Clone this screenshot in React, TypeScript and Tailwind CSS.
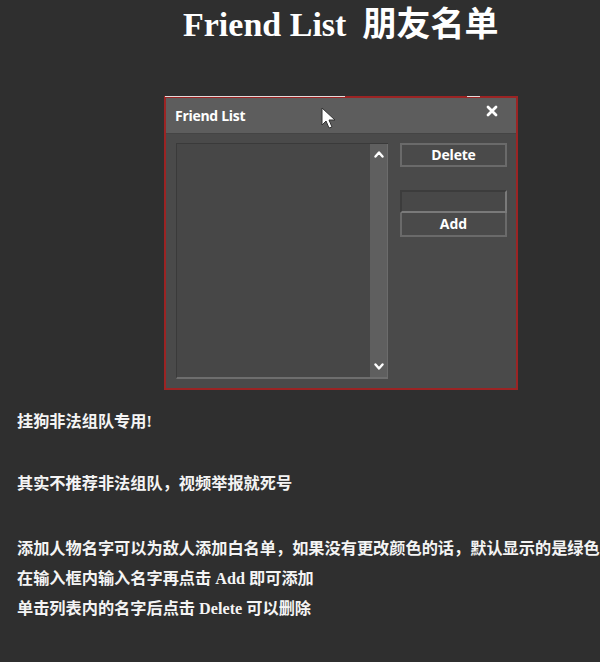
import React from 'react';

const cjk = '"Liberation Serif", "Noto Sans CJK SC", serif';

const notes = [
  { text: '挂狗非法组队专用!', mt: 'mt-0' },
  { text: '其实不推荐非法组队，视频举报就死号', mt: 'mt-[32px]' },
  { text: '添加人物名字可以为敌人添加白名单，如果没有更改颜色的话，默认显示的是绿色', mt: 'mt-[35px]' },
  { text: '在输入框内输入名字再点击 Add 即可添加', mt: 'mt-0' },
  { text: '单击列表内的名字后点击 Delete 可以删除', mt: 'mt-0' },
];

const Chevron = ({ down = false }: { down?: boolean }) => (
  <svg width="10" height="8" viewBox="0 0 10 8" className={down ? 'rotate-180' : ''}>
    <path d="M1.5 6.5 L5 2.5 L8.5 6.5" fill="none" stroke="#ffffff" strokeWidth="2.4" strokeLinecap="round" strokeLinejoin="round" />
  </svg>
);

const FriendListWindow = () => (
  <div className="relative ml-[164px] mt-[49px] w-[354px]">
    {/* stray highlight lines over the top border */}
    <div className="absolute left-[1px] top-0 h-[1px] w-[180px] bg-[#e6dcdc]" />
    <div className="absolute left-[303px] top-0 h-[1px] w-[13px] bg-[#e6dcdc]" />

    <div className="flex h-[294px] flex-col border-2 border-[#9b2424] bg-[#4a4a4a]">
      <div className="flex h-[36px] items-center justify-between border-b border-[#444] bg-[#5d5d5d] pl-[9px] pr-[18px]">
        <span className="text-[14px] font-bold tracking-[-0.3px] text-white" style={{ fontFamily: '"Open Sans", sans-serif' }}>
          Friend List
        </span>
        <svg width="12" height="12" viewBox="0 0 12 12" className="mb-[10px]">
          <path d="M2 2 L10 10 M10 2 L2 10" stroke="#ffffff" strokeWidth="2.8" strokeLinecap="round" />
        </svg>
      </div>

      <div className="flex gap-[12px] pl-[10px] pt-[9px]">
        <div className="flex h-[236px] w-[212px] border-l border-t border-[#3a3a3a] border-b-2 border-b-[#6e6e6e]">
          <div className="flex-1 bg-[#474747]" />
          <div className="flex w-[18px] flex-col items-center justify-between border-r border-[#6c6c6c] bg-[#5f5f5f] pb-[6px] pt-[6px]">
            <Chevron />
            <Chevron down />
          </div>
        </div>

        <div className="flex w-[107px] flex-col" style={{ fontFamily: '"Open Sans", sans-serif' }}>
          <button className="h-[24px] w-full border-2 border-[#6a6a6a] bg-[#4a4a4a] text-[14px] font-bold leading-[20px] tracking-[-0.2px] text-white">
            Delete
          </button>
          <div className="mt-[23px] h-[23px] w-full border-2 border-[#3c3c3c] border-b-[#7a7a7a] border-r-[#7a7a7a] bg-[#484848]" />
          <button className="h-[24px] w-full border-2 border-[#6a6a6a] border-t-0 bg-[#4a4a4a] text-[14px] font-bold leading-[22px] text-white">
            Add
          </button>
        </div>
      </div>
    </div>

    {/* mouse pointer */}
    <svg width="16" height="24" viewBox="0 0 16 24" className="absolute left-[157px] top-[11px]">
      <path d="M1 1 L1 18 L5 14 L8 21 L11 20 L8 13 L14 13 Z" fill="#ffffff" stroke="#333" strokeWidth="1" strokeLinejoin="round" />
    </svg>
  </div>
);

export default function App() {
  return (
    <div className="min-h-[662px] w-[600px] bg-[#2f2f2f] pt-[3px]" style={{ fontFamily: cjk }}>
      <h1 className="pl-[183px] text-[34px] font-bold leading-[44px] text-white">
        Friend List<span className="ml-[16px]">朋友名单</span>
      </h1>

      <FriendListWindow />

      <div className="mt-[17px] pl-[17px] text-[16.2px] font-bold leading-[30px] text-[#f4f4f4]">
        {notes.map((n, i) => (
          <p key={i} className={n.mt}>{n.text}</p>
        ))}
      </div>
    </div>
  );
}
